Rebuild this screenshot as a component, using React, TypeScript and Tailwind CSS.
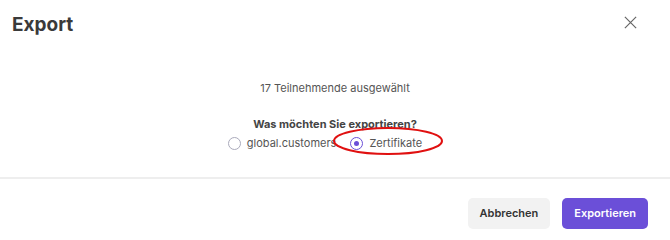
export default function App() {
  return (
    <div
      className="flex h-[236px] w-[670px] flex-col bg-white text-[#333]"
      style={{ fontFamily: "Inter, 'Liberation Sans', sans-serif" }}
    >
      <div className="flex h-[48px] items-start justify-between px-3 pt-[13px]">
        <h1 className="text-[19px] font-bold leading-[24px] text-[#3a3a3a]">Export</h1>
        <button className="mr-[20px] mt-[2px] text-[#666]">
          <svg width="15" height="15" viewBox="0 0 16 16" fill="none" stroke="currentColor" strokeWidth="1.3">
            <path d="M2 2l12 12M14 2L2 14" />
          </svg>
        </button>
      </div>
      <div className="flex h-[129px] flex-col items-center pt-[33px]">
        <p className="text-[11px] leading-[14px] text-[#555]">17 Teilnehmende ausgewählt</p>
        <p className="mt-[22px] text-[11px] font-bold leading-[14px] text-[#444]">Was möchten Sie exportieren?</p>
        <div className="relative mr-[20px] mt-[4px] flex items-center text-[11px] text-[#555]">
          <label className="flex items-center gap-[6px]">
            <span className="h-[13px] w-[13px] rounded-full border border-[#aab]" />
            global.customers
          </label>
          <label className="ml-[14px] flex items-center gap-[6px]">
            <span className="flex h-[13px] w-[13px] items-center justify-center rounded-full border border-[#6b4fd8]">
              <span className="h-[5px] w-[5px] rounded-full bg-[#6b4fd8]" />
            </span>
            Zertifikate
          </label>
          <svg className="absolute left-[104px] top-[-9px]" width="112" height="30" viewBox="0 0 112 30" fill="none">
            <ellipse cx="56" cy="15" rx="54" ry="13" stroke="#e01010" strokeWidth="2" />
          </svg>
        </div>
      </div>
      <div className="h-[2px] bg-[#eeeeee]" />
      <div className="flex justify-end gap-[12px] px-[22px] pt-[19px]">
        <button className="h-[31px] rounded-[5px] bg-[#f2f2f2] px-[12px] text-[11px] font-semibold text-[#333]">Abbrechen</button>
        <button className="h-[31px] rounded-[5px] bg-[#6b4fd8] px-[12px] text-[11px] font-semibold text-white">Exportieren</button>
      </div>
    </div>
  );
}
